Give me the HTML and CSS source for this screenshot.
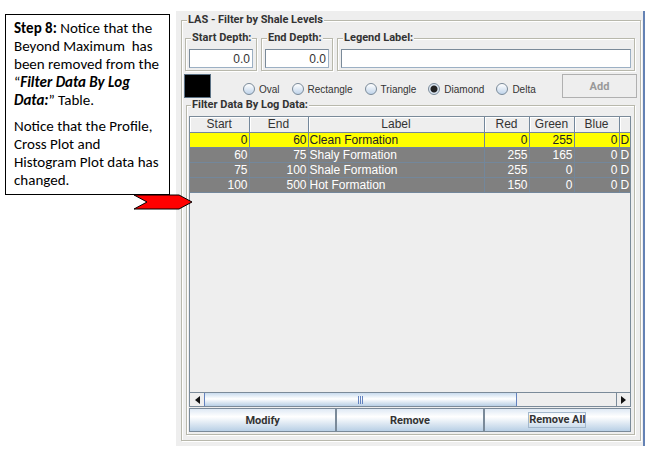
FILE: index.html
```html
<!DOCTYPE html>
<html lang="en">
<head>
<meta charset="utf-8">
<title>LAS - Filter by Shale Levels</title>
<link rel="stylesheet" href="styles.css">
</head>
<body>
<aside class="note">
  <p><strong>Step 8:</strong> Notice that the Beyond Maximum&nbsp; has been removed from the “<strong><em>Filter Data By Log Data:</em></strong>” Table.</p>
  <p>Notice that the Profile, Cross Plot and Histogram Plot data has changed.</p>
  <svg class="arrow" width="60" height="16" viewBox="0 0 60 16" aria-hidden="true"><path d="M1 1H46L59 8L46 15H1L14 8Z" fill="#f00" stroke="#000"/></svg>
</aside>
<main class="window">
  <fieldset class="group outer">
    <legend>LAS - Filter by Shale Levels</legend>
    <div class="fields">
      <fieldset class="group depth"><legend><label for="start">Start Depth:</label></legend><input id="start" type="text" value="0.0"></fieldset>
      <fieldset class="group depth"><legend><label for="end">End Depth:</label></legend><input id="end" type="text" value="0.0"></fieldset>
      <fieldset class="group name"><legend><label for="label">Legend Label:</label></legend><input id="label" type="text"></fieldset>
    </div>
    <div class="symbols">
      <button class="swatch" type="button" aria-label="Color"></button>
      <div class="radios">
        <label><input type="radio" name="symbol">Oval</label>
        <label><input type="radio" name="symbol">Rectangle</label>
        <label><input type="radio" name="symbol">Triangle</label>
        <label><input type="radio" name="symbol" checked>Diamond</label>
        <label><input type="radio" name="symbol">Delta</label>
      </div>
      <button class="add" type="button" disabled>Add</button>
    </div>
    <fieldset class="group data">
      <legend>Filter Data By Log Data:</legend>
      <div class="pane">
        <div class="view">
          <table>
            <colgroup><col class="c-depth"><col class="c-depth"><col><col class="c-rgb"><col class="c-rgb"><col class="c-rgb"><col class="c-cut"></colgroup>
            <thead><tr><th>Start</th><th>End</th><th>Label</th><th>Red</th><th>Green</th><th>Blue</th><th></th></tr></thead>
            <tbody>
              <tr class="clean"><td>0</td><td>60</td><td class="text">Clean Formation</td><td>0</td><td>255</td><td>0</td><td class="text">D</td></tr>
              <tr><td>60</td><td>75</td><td class="text">Shaly Formation</td><td>255</td><td>165</td><td>0</td><td class="text">D</td></tr>
              <tr><td>75</td><td>100</td><td class="text">Shale Formation</td><td>255</td><td>0</td><td>0</td><td class="text">D</td></tr>
              <tr><td>100</td><td>500</td><td class="text">Hot Formation</td><td>150</td><td>0</td><td>0</td><td class="text">D</td></tr>
            </tbody>
          </table>
        </div>
        <div class="scroll">
          <button type="button" class="step" aria-label="Scroll left"><svg width="5" height="8" viewBox="0 0 5 8"><path d="M5 0V8L0 4Z" fill="#111"/></svg></button>
          <div class="track"><div class="thumb"><i></i><i></i><i></i></div></div>
          <button type="button" class="step right" aria-label="Scroll right"><svg width="5" height="8" viewBox="0 0 5 8"><path d="M0 0V8L5 4Z" fill="#111"/></svg></button>
        </div>
      </div>
      <div class="actions">
        <button type="button">Modify</button>
        <button type="button">Remove</button>
        <button type="button"><span class="focus">Remove All</span></button>
      </div>
    </fieldset>
  </fieldset>
</main>
</body>
</html>
```
FILE: styles.css
```css
* { box-sizing: border-box; }
body {
  margin: 0;
  padding: 11px 11px 8px 5px;
  display: flex;
  align-items: flex-start;
  gap: 6px;
  background: #fff;
  color: #333;
  font-family: Roboto, "Liberation Sans", Arial, sans-serif;
  font-size: 11px;
}
button, input { font: inherit; color: inherit; margin: 0; }

.note {
  position: relative;
  flex: none;
  width: 165px;
  height: 181px;
  margin-top: 3px;
  padding: 4px 8px;
  border: 1px solid #000;
  color: #000;
  font-family: Carlito, Calibri, Lato, sans-serif;
  font-size: 15px;
  line-height: 18px;
}
.note p { margin: 0 0 8px; }
.arrow { position: absolute; left: 127px; top: 179px; }

.window {
  flex: 1;
  min-width: 0;
  padding: 2px 2px 5px 5px;
  background: #eee;
  border-right: 2px solid #6482b4;
}
.group {
  min-width: 0;
  margin: 0;
  border: 1px solid #b8b8ac;
  box-shadow: 1px 1px #fff, inset 1px 1px #fff;
}
legend {
  margin-left: 2px;
  padding: 0 1px;
  background: #eee;
  font-weight: bold;
  line-height: 14px;
  white-space: nowrap;
}
.outer { padding: 4px 5px 5px 3px; }
.fields { display: flex; gap: 4px; }
.depth { flex: none; width: 72px; padding: 4px 3px 2px; }
.name { flex: 1; padding: 4px 3px 2px; }
.fields input {
  display: block;
  width: 100%;
  height: 19px;
  padding: 2px;
  border: 1px solid #7a8a99;
  border-right-color: #9cb0c4;
  border-bottom-color: #9cb0c4;
  border-radius: 0;
  background: #fff;
  font-family: "Liberation Sans", Arial, sans-serif;
  font-size: 12px;
}
.depth input { text-align: right; }

.symbols { display: flex; height: 24px; margin: 3px -2px 0 -1px; }
.swatch { width: 27px; height: 24px; padding: 0; background: #000; border: 1px solid #5b7184; }
.radios {
  flex: 1;
  display: flex;
  gap: 12px;
  padding: 6px 0 0 32px;
  font-family: "Liberation Sans", Arial, sans-serif;
  font-size: 10px;
}
.radios label { display: flex; align-items: center; gap: 4px; height: 18px; }
.radios input {
  appearance: none;
  width: 12px;
  height: 12px;
  border: 1px solid #7a8a99;
  border-radius: 50%;
  background: linear-gradient(#fff, #c0d4ea);
}
.radios input:checked { background: radial-gradient(circle, #222 3px, #dce7f3 4px); }
.add {
  width: 75px;
  border: 1px solid #b0b0b0;
  background: #eee;
  color: #999;
  font-weight: bold;
}

.data { padding: 4px 3px 2px 2px; margin: 0 0 0 1px; }
.pane { border: 1px solid #7a8a99; height: 291px; display: flex; flex-direction: column; }
.view { flex: 1; overflow: hidden; }
table { width: 100%; table-layout: fixed; border-collapse: collapse; font-family: "Liberation Sans", Arial, sans-serif; font-size: 12px; line-height: 14px; }
.c-depth { width: 59px; }
.c-rgb { width: 45px; }
.c-cut { width: 11px; }
th, td { padding: 0 1px; border-right: 1px solid #73879b; border-bottom: 1px solid #73879b; overflow: hidden; white-space: nowrap; }
th:last-child, td:last-child { border-right: 0; }
th { height: 15px; font-weight: normal; background: #eee; box-shadow: inset 1px 1px #fff; }
td { height: 15px; text-align: right; background: #808080; color: #fff; }
td.text { text-align: left; }
.clean td { background: #ff0; color: #222; }

.scroll { flex: none; display: flex; height: 14px; border-top: 1px solid #7a8a99; }
.step { width: 14px; padding: 0; border: 0; background: #eee; display: flex; align-items: center; justify-content: center; }
.step.right { border-left: 1px solid #7a8a99; }
.track { flex: 1; }
.thumb {
  width: 76%;
  height: 13px;
  display: flex;
  align-items: center;
  justify-content: center;
  gap: 1px;
  border: 1px solid #6382bf;
  border-width: 0 1px;
  background: linear-gradient(#c8dbee, #fff 45%, #b8cfe5);
}
.thumb i { width: 1px; height: 8px; background: #6382bf; }
.actions { display: grid; grid-template-columns: repeat(3, 1fr); height: 24px; margin-top: 1px; }
.actions button {
  padding: 0;
  border: 1px solid #7a8a99;
  background: linear-gradient(#dfe9f4, #fff 35%, #b8cfe5);
  font-weight: bold;
}
.focus { display: inline-block; border: 1px solid #a3b8cc; line-height: 14px; }
```
